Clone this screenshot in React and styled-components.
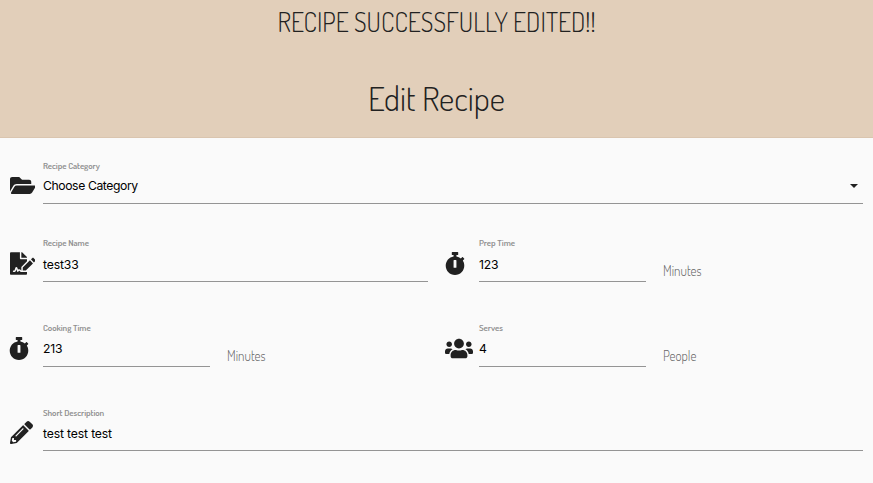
import React from "react";
import styled, { createGlobalStyle } from "styled-components";
import { FaFolderOpen, FaFileSignature, FaStopwatch, FaUsers, FaPencilAlt } from "react-icons/fa";

const GlobalStyle = createGlobalStyle`
  * { box-sizing: border-box; }
  body { margin: 0; background: #fafafa; color: #212121; overflow: hidden; font-family: Dosis, Roboto, sans-serif; }
`;

const Header = styled.header`
  height: 138px;
  background: #e2cfba;
  border-bottom: 1px solid #dac5af;
  display: flex;
  flex-direction: column;
  align-items: center;
  font-weight: 300;
  white-space: nowrap;
`;

const Notice = styled.p`
  margin: 6px 0 0;
  font-size: 25.9px;
  line-height: 32px;
`;

const Title = styled.h1`
  margin: 38px 0 0;
  font-size: 33.5px;
  font-weight: 300;
  line-height: 44px;
`;

const Form = styled.main`
  display: grid;
  grid-template-columns: 419px 418px;
  column-gap: 17px;
  grid-template-rows: 78px 85px 84px 47px;
  padding: 19px 10px 0 9px;
`;

const Field = styled.div`
  display: flex;
  grid-column: ${(p) => (p.$wide ? "1 / -1" : "auto")};
  height: 47px;
`;

const IconSlot = styled.span`
  flex: 0 0 34px;
  padding: 17px 0 0 ${(p) => p.$inset}px;
  svg { display: block; width: ${(p) => p.$w}px; height: 23px; }
`;

const Control = styled.div`
  flex: ${(p) => (p.$short ? "0 0 167px" : "1")};
  border-bottom: 1px solid #949494;
  display: flex;
  flex-direction: column;
`;

const Label = styled.label`
  margin-top: ${(p) => p.$top}px;
  height: 12px;
  font-size: 9px;
  line-height: 12px;
  font-weight: 600;
  letter-spacing: -0.05px;
  color: #8f8f8f;
  white-space: nowrap;
`;

const Value = styled.div`
  display: flex;
  justify-content: space-between;
  align-items: center;
  height: 18px;
  margin-top: ${(p) => p.$top}px;
  font: 400 12.2px/18px Inter, sans-serif;
  letter-spacing: ${(p) => p.$tracking}px;
  color: #000;
`;

const Caret = styled.span`
  margin-right: 5px;
  border: 4px solid transparent;
  border-top-color: #212121;
  border-bottom: 0;
`;

const Unit = styled.span`
  margin: 27px 0 0 17px;
  font-size: 14px;
  line-height: 18px;
  font-weight: 300;
  color: #666;
  transform-origin: left;
  transform: scaleX(0.94);
`;

function Entry({ icon: Icon, iconWidth, iconInset = 0, label, labelTop = 2, value, valueTop = 6, tracking = -0.15, wide, unit, caret }) {
  return (
    <Field $wide={wide}>
      <IconSlot $w={iconWidth} $inset={iconInset}><Icon /></IconSlot>
      <Control $short={!!unit}>
        <Label $top={labelTop}>{label}</Label>
        <Value $top={valueTop} $tracking={tracking}>{value}{caret && <Caret />}</Value>
      </Control>
      {unit && <Unit>{unit}</Unit>}
    </Field>
  );
}

export default function App() {
  return (
    <>
      <GlobalStyle />
      <Header>
        <Notice>RECIPE SUCCESSFULLY EDITED!!</Notice>
        <Title>Edit Recipe</Title>
      </Header>
      <Form>
        <Entry wide icon={FaFolderOpen} iconWidth={25.5} iconInset={0.5} label="Recipe Category" labelTop={3} valueTop={5} value="Choose Category" tracking={-0.4} caret />
        <Entry icon={FaFileSignature} iconWidth={25.5} iconInset={0.5} label="Recipe Name" value="test33" valueTop={7} />
        <Entry icon={FaStopwatch} iconWidth={20} label="Prep Time" value="123" valueTop={7} unit="Minutes" />
        <Entry icon={FaStopwatch} iconWidth={20} label="Cooking Time" value="213" unit="Minutes" />
        <Entry icon={FaUsers} iconWidth={28} label="Serves" value="4" unit="People" />
        <Entry wide icon={FaPencilAlt} iconWidth={23} iconInset={0.5} label="Short Description" labelTop={3} value="test test test" />
      </Form>
    </>
  );
}
